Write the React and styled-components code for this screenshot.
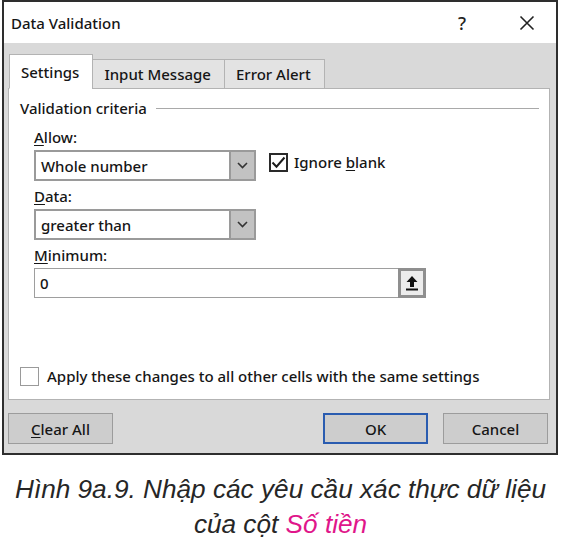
import React from "react";
import styled, { createGlobalStyle } from "styled-components";

const GlobalStyle = createGlobalStyle`
	html, body {
		margin: 0;
		padding: 0;
		background: #ffffff;
	}
`;

const Page = styled.div`
	width: 561px;
	height: 543px;
	display: flex;
	flex-direction: column;
	font-family: "Noto Sans", "Open Sans", sans-serif;
	color: #161616;
`;

const Dialog = styled.div`
	margin-left: 2px;
	width: 552px;
	height: 451px;
	border: 2px solid #2e2e2e;
	display: flex;
	flex-direction: column;
	background: #d9d9d9;
`;

const TitleBar = styled.div`
	height: 41px;
	background: #ffffff;
	display: flex;
	align-items: center;
	gap: 7px;
	padding: 0 0 0 7px;
	font-size: 15px;
	font-weight: 500;
`;

const Title = styled.span`
	flex: 1;
`;

const TitleButton = styled.span`
	width: 58px;
	display: flex;
	justify-content: center;
	align-items: center;
	font-size: 18px;
	font-weight: 500;
	color: #222;
`;

const Body = styled.div`
	flex: 1;
	display: flex;
	flex-direction: column;
	padding: 11px 6px 0 4px;
`;

const Tabs = styled.div`
	display: flex;
	align-items: flex-end;
	padding-left: 1px;
	position: relative;
	z-index: 1;
	margin-bottom: -1px;
`;

const Tab = styled.div`
	height: ${(p) => (p.$active ? 35 : 30)}px;
	padding: 0 13px 0 11px;
	display: flex;
	align-items: center;
	font-size: 15px;
	font-weight: 500;
	background: ${(p) => (p.$active ? "#ffffff" : "#e3e3e3")};
	border: 1px solid #b3b3b3;
	border-bottom: ${(p) => (p.$active ? "1px solid #ffffff" : "1px solid #b3b3b3")};
	margin-right: -1px;
	box-sizing: border-box;
`;

const Panel = styled.div`
	height: 312px;
	box-sizing: border-box;
	background: #ffffff;
	border: 1px solid #b3b3b3;
	padding: 9px 10px 0 11px;
	display: flex;
	flex-direction: column;
`;

const Legend = styled.div`
	display: flex;
	align-items: center;
	gap: 9px;
	font-size: 15px;
	font-weight: 500;
	height: 20px;
`;

const Rule = styled.div`
	flex: 1;
	height: 1px;
	background: #a9a9a9;
`;

const Form = styled.div`
	display: flex;
	flex-direction: column;
	padding-left: 14px;
	margin-top: 8px;
`;

const Label = styled.div`
	font-size: 15px;
	font-weight: 500;
	height: 22px;
	display: flex;
	align-items: center;
	margin-bottom: 2px;
`;

const Key = styled.span`
	text-decoration: underline;
	text-underline-offset: 2px;
`;

const Row = styled.div`
	display: flex;
	align-items: flex-start;
	gap: 13px;
	margin-bottom: 4px;
`;

const Select = styled.div`
	width: 222px;
	height: 31px;
	box-sizing: border-box;
	border: 2px solid #9a9a9a;
	display: flex;
	align-items: stretch;
	background: #fff;
`;

const Value = styled.div`
	flex: 1;
	display: flex;
	align-items: center;
	padding-left: 5px;
	font-size: 15px;
	font-weight: 500;
`;

const DropButton = styled.div`
	width: 23px;
	background: #c2c2c2;
	border-left: 2px solid #9a9a9a;
	display: flex;
	align-items: center;
	justify-content: center;
`;

const Check = styled.div`
	width: 19px;
	height: 19px;
	box-sizing: border-box;
	border: ${(p) => (p.$on ? "2px solid #2a2a2a" : "1px solid #9a9a9a")};
	background: #fff;
	display: flex;
	align-items: center;
	justify-content: center;
	flex-shrink: 0;
`;

const CheckItem = styled.label`
	display: flex;
	align-items: center;
	gap: ${(p) => p.$gap || 6}px;
	font-size: 15px;
	font-weight: 500;
	margin-top: ${(p) => p.$top || 0}px;
`;

const Input = styled.div`
	width: 392px;
	height: 30px;
	box-sizing: border-box;
	border: 1px solid #9e9e9e;
	display: flex;
	align-items: stretch;
`;

const RefButton = styled.div`
	width: 28px;
	box-sizing: border-box;
	border: 3px solid #8f8f8f;
	background: #ececec;
	display: flex;
	align-items: center;
	justify-content: center;
	margin: -1px -1px -1px 0;
`;

const Footer = styled.div`
	display: flex;
	align-items: center;
	margin-top: 13px;
`;

const Button = styled.div`
	width: ${(p) => p.$w || 105}px;
	height: 31px;
	box-sizing: border-box;
	background: #cdcdcd;
	border: ${(p) => (p.$primary ? "2px solid #2a5cb0" : "1px solid #9c9c9c")};
	display: flex;
	align-items: center;
	justify-content: center;
	font-size: 15px;
	font-weight: 500;
	margin-left: ${(p) => p.$ml || 0}px;
`;

const Caption = styled.div`
	margin-top: 17px;
	text-align: center;
	font-family: "Liberation Sans", Arial, sans-serif;
	font-style: italic;
	font-size: 26.2px;
	line-height: 35px;
	color: #262626;
`;

const Accent = styled.span`
	color: #e0168a;
`;

const Chevron = () => (
	<svg width="11" height="7" viewBox="0 0 11 7">
		<path d="M1 1l4.5 4.5L10 1" fill="none" stroke="#333" strokeWidth="1.6" />
	</svg>
);

const Tick = () => (
	<svg width="15" height="13" viewBox="0 0 15 13">
		<path d="M1.5 6.5l4 4.2L13.5 1.5" fill="none" stroke="#1c1c1c" strokeWidth="2" />
	</svg>
);

const UpArrow = () => (
	<svg width="14" height="16" viewBox="0 0 14 16">
		<path d="M7 1L1.5 7H5v5h4V7h3.5z" fill="#111" />
		<rect x="1" y="13.5" width="12" height="2" fill="#111" />
	</svg>
);

const Close = () => (
	<svg width="16" height="16" viewBox="0 0 16 16">
		<path d="M1.5 1.5l13 13M14.5 1.5l-13 13" stroke="#222" strokeWidth="1.6" />
	</svg>
);

const App = () => {
	return (
		<Page>
			<GlobalStyle />
			<Dialog>
				<TitleBar>
					<Title>Data Validation</Title>
					<TitleButton>?</TitleButton>
					<TitleButton>
						<Close />
					</TitleButton>
				</TitleBar>
				<Body>
					<Tabs>
						<Tab $active>Settings</Tab>
						<Tab>Input Message</Tab>
						<Tab>Error Alert</Tab>
					</Tabs>
					<Panel>
						<Legend>
							<span>Validation criteria</span>
							<Rule />
						</Legend>
						<Form>
							<Label>
								<span><Key>A</Key>llow:</span>
							</Label>
							<Row>
								<Select>
									<Value>Whole number</Value>
									<DropButton>
										<Chevron />
									</DropButton>
								</Select>
								<CheckItem $top={2}>
									<Check $on>
										<Tick />
									</Check>
									<span>Ignore <Key>b</Key>lank</span>
								</CheckItem>
							</Row>
							<Label>
								<span><Key>D</Key>ata:</span>
							</Label>
							<Row>
								<Select>
									<Value>greater than</Value>
									<DropButton>
										<Chevron />
									</DropButton>
								</Select>
							</Row>
							<Label>
								<span><Key>M</Key>inimum:</span>
							</Label>
							<Row>
								<Input>
									<Value>0</Value>
									<RefButton>
										<UpArrow />
									</RefButton>
								</Input>
							</Row>
						</Form>
						<CheckItem $top={64} $gap={8}>
							<Check />
							<span>Apply these changes to all other cells with the same settings</span>
						</CheckItem>
					</Panel>
					<Footer>
						<Button>
							<span><Key>C</Key>lear All</span>
						</Button>
						<Button $primary $ml={210}>OK</Button>
						<Button $ml={15}>Cancel</Button>
					</Footer>
				</Body>
			</Dialog>
			<Caption>
				Hình 9a.9. Nhập các yêu cầu xác thực dữ liệu
				<br />
				của cột <Accent>Số tiền</Accent>
			</Caption>
		</Page>
	);
};

export default App;
